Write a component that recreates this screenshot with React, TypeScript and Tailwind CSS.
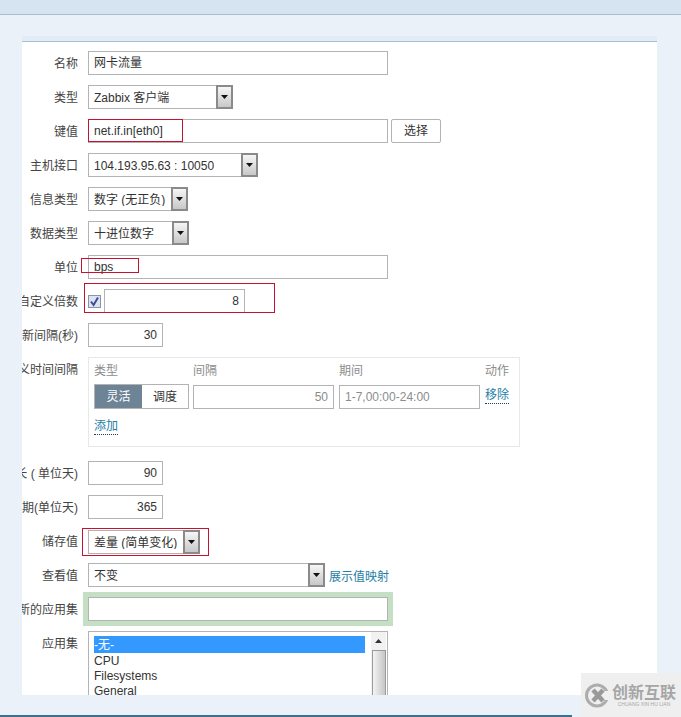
const font = "font-['Liberation_Sans','Noto_Sans_CJK_SC',sans-serif]";

function Row({ label, children }: { label: string; children: React.ReactNode }) {
  return (
    <div className="relative flex items-start gap-[10px]">
      <div className="flex h-[24px] w-[56px] shrink-0 items-center justify-end overflow-hidden whitespace-nowrap pt-[1px] text-[#444]">
        <span className="shrink-0">{label}</span>
      </div>
      {children}
    </div>
  );
}

function Field({
  value,
  className,
  muted,
}: {
  value: string;
  className: string;
  muted?: boolean;
}) {
  return (
    <div
      className={`flex h-[24px] shrink-0 items-center border border-[#b3b3b3] bg-white px-[5px] ${
        muted ? "text-[#8c8c8c]" : "text-[#333]"
      } ${className}`}
    >
      {value}
    </div>
  );
}

function Select({ value, className }: { value: string; className: string }) {
  return (
    <div className={`flex h-[24px] shrink-0 items-center border border-[#b3b3b3] bg-white ${className}`}>
      <span className="flex-1 overflow-hidden whitespace-nowrap pl-[5px] pt-[2px] text-[#333]">{value}</span>
      <span className="-mr-px flex h-[24px] w-[17px] shrink-0 items-center justify-center border-2 border-[#8a8a8a] bg-gradient-to-b from-[#f6f6f6] to-[#c8c8c8]">
        <svg width="7" height="4" viewBox="0 0 7 4">
          <path d="M0 0h7L3.5 4z" fill="#111" />
        </svg>
      </span>
    </div>
  );
}

function Mark({ className }: { className: string }) {
  return <div className={`pointer-events-none absolute border border-[#c41230] ${className}`} />;
}

export default function App() {
  return (
    <div className={`${font} h-[717px] w-[681px] overflow-hidden bg-[#ebf1f9] text-[12px] leading-none`}>
      <div className="h-[15px] border-b border-[#a6bdd3] bg-[#d6e4f1]" />
      <div className="ml-[22px] mt-[21px] h-[659px] w-[635px] overflow-hidden bg-white">
        <div className="h-[6px] border-b border-[#a9bfd3] bg-[#e3ecf6]" />
        <div className="flex flex-col gap-[10px] pt-[9px]">
          <Row label="名称">
            <Field value="网卡流量" className="w-[300px] text-[#333]" />
          </Row>
          <Row label="类型">
            <Select value="Zabbix 客户端" className="w-[145px]" />
          </Row>
          <Row label="键值">
            <Field value="net.if.in[eth0]" className="w-[300px]" />
            <button className="-ml-[7px] h-[24px] w-[50px] rounded-[2px] border border-[#b3b3b3] bg-white text-[#333]">
              选择
            </button>
            <Mark className="left-[66px] top-0 h-[23px] w-[95px]" />
          </Row>
          <Row label="主机接口">
            <Select value="104.193.95.63 : 10050" className="w-[170px]" />
          </Row>
          <Row label="信息类型">
            <Select value="数字 (无正负)" className="w-[100px]" />
          </Row>
          <Row label="数据类型">
            <Select value="十进位数字" className="w-[101px]" />
          </Row>
          <Row label="单位">
            <Field value="bps" className="w-[300px]" />
            <Mark className="left-[59px] top-[3px] h-[15px] w-[58px]" />
          </Row>
          <Row label="自定义倍数">
            <div className="flex items-center gap-[3px]">
              <span className="flex h-[13px] w-[13px] items-center justify-center border border-[#8a94a6] bg-[#dde3f0]">
                <svg width="11" height="11" viewBox="0 0 11 11">
                  <path d="M2 5.5 4.6 9 9 1.5" fill="none" stroke="#3a4f9a" strokeWidth="2" />
                </svg>
              </span>
              <Field value="8" className="w-[141px] justify-end" />
            </div>
            <Mark className="left-[62px] -top-[6px] h-[30px] w-[191px]" />
          </Row>
          <Row label="更新间隔(秒)">
            <Field value="30" className="w-[75px] justify-end" />
          </Row>
          <Row label="自定义时间间隔">
            <div className="mb-[4px] h-[90px] w-[432px] border border-[#e8e8e8] px-[5px] pt-[7px]">
              <div className="flex h-[12px] text-[#8c8c8c]">
                <span className="w-[99px]">类型</span>
                <span className="w-[146px]">间隔</span>
                <span className="w-[146px]">期间</span>
                <span>动作</span>
              </div>
              <div className="mt-[7px] flex items-center">
                <div className="flex h-[25px] w-[95px] border border-[#b3b3b3]">
                  <span className="flex w-[47px] items-center justify-center bg-[#6d8496] text-white">灵活</span>
                  <span className="flex flex-1 items-center justify-center text-[#333]">调度</span>
                </div>
                <Field value="50" muted className="ml-[4px] w-[141px] justify-end" />
                <Field value="1-7,00:00-24:00" muted className="ml-[5px] w-[141px]" />
                <span className="ml-[5px] border-b border-dotted border-[#1b3f5c] pb-[2px] text-[#1f7ea5]">移除</span>
              </div>
              <span className="mt-[11px] inline-block border-b border-dotted border-[#1b3f5c] pb-[2px] text-[#1f7ea5]">
                添加
              </span>
            </div>
          </Row>
          <Row label="保存时长 ( 单位天)">
            <Field value="90" className="w-[75px] justify-end" />
          </Row>
          <Row label="趋势周期(单位天)">
            <Field value="365" className="w-[75px] justify-end" />
          </Row>
          <Row label="储存值">
            <Select value="差量 (简单变化)" className="mt-px -mb-px w-[112px]" />
            <Mark className="left-[60px] -top-[1px] h-[28px] w-[127px]" />
          </Row>
          <Row label="查看值">
            <Select value="不变" className="w-[237px]" />
            <span className="-ml-[6px] flex h-[24px] items-center pt-[3px] text-[#1f7ea5]">展示值映射</span>
          </Row>
          <Row label="新的应用集">
            <div className="h-[24px] w-[300px] border border-[#b3b3b3] bg-white shadow-[0_0_0_5px_#c4dfc4]" />
          </Row>
          <Row label="应用集">
            <div className="flex h-[80px] w-[300px] shrink-0 border border-[#b3b3b3] bg-white pl-[5px] pt-[4px]">
              <div className="w-[271px] text-[#333]">
                <div className="flex h-[17px] items-center bg-[#3399ff] text-white">-无-</div>
                <div className="flex h-[15px] items-center">CPU</div>
                <div className="flex h-[15px] items-center">Filesystems</div>
                <div className="flex h-[15px] items-center">General</div>
              </div>
              <div className="-mt-[4px] ml-[6px] flex w-[15px] flex-col items-center bg-[#f2f2f2]">
                <div className="flex h-[18px] items-center">
                  <svg width="7" height="4" viewBox="0 0 7 4">
                    <path d="M0 4 3.5 0 7 4z" fill="#333" />
                  </svg>
                </div>
                <div className="h-[60px] w-[14px] border border-[#9a9a9a] bg-gradient-to-r from-[#f4f4f4] to-[#c6c6c6]" />
              </div>
            </div>
          </Row>
        </div>
      </div>
      <div className="mt-[20px] h-[2px] w-[572px] bg-[#3f6f8f]" />
      <div className="absolute left-[581px] top-[673px] flex h-[44px] w-[100px] items-center gap-[1px] bg-[#efefef] pl-[3px]">
        <svg width="27" height="27" viewBox="0 0 27 27" className="shrink-0">
          <circle cx="13" cy="13.5" r="10.5" fill="none" stroke="#adadad" strokeWidth="3" />
          <path d="M9 8 19 19M19 8 9 19" fill="none" stroke="#999" strokeWidth="4.5" />
          <rect x="21" y="9" width="6" height="9" fill="#efefef" />
        </svg>
        <div className="flex flex-col items-center text-[#a6a6a6]">
          <span className="text-[16px] font-bold leading-[17px]">创新互联</span>
          <span className="mt-px text-[5px] whitespace-nowrap">CHUANG XIN HU LIAN</span>
        </div>
      </div>
    </div>
  );
}
